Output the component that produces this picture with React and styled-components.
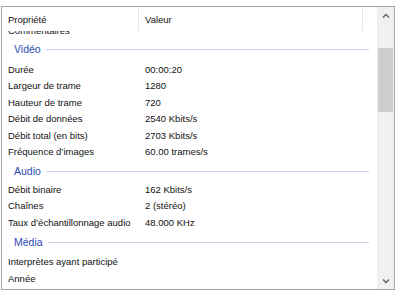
import React from 'react';
import styled, { createGlobalStyle } from 'styled-components';

const GlobalStyle = createGlobalStyle`
  html, body {
    margin: 0;
    padding: 0;
    background: #ffffff;
  }
  body {
    font-family: "Liberation Sans", Arial, sans-serif;
    font-size: 9.5px;
    color: #111111;
  }
`;

const Page = styled.div`
  width: 400px;
  height: 297px;
  padding: 6px 5px 7px 1px;
  box-sizing: border-box;
  background: #ffffff;
`;

const Frame = styled.div`
  display: flex;
  height: 100%;
  border: 1px solid #a8a8a8;
  box-sizing: border-box;
  background: #ffffff;
`;

const ListArea = styled.div`
  flex: 1;
  display: flex;
  flex-direction: column;
  overflow: hidden;
`;

const Header = styled.div`
  display: flex;
  height: 24px;
  flex-shrink: 0;
`;

const HeaderCell = styled.div`
  width: ${(p) => p.$width}px;
  flex-shrink: 0;
  display: flex;
  align-items: center;
  padding-left: ${(p) => p.$pad}px;
  box-sizing: border-box;
  border-right: 1px solid #e5e5e5;
  margin: 1px 0 0;
`;

const Body = styled.div`
  flex: 1;
  overflow: hidden;
  display: flex;
  flex-direction: column;
`;

const ClippedRow = styled.div`
  height: 6px;
  overflow: hidden;
  display: flex;
  align-items: flex-end;
  padding-left: 6px;
  line-height: 12px;
  flex-shrink: 0;
`;

const Row = styled.div`
  display: flex;
  align-items: center;
  height: 16.5px;
  flex-shrink: 0;
`;

const NameCell = styled.div`
  width: 137px;
  padding-left: 6px;
  box-sizing: border-box;
  white-space: nowrap;
  flex-shrink: 0;
`;

const ValueCell = styled.div`
  padding-left: 6px;
  white-space: nowrap;
`;

const Group = styled.div`
  display: flex;
  align-items: center;
  gap: 5px;
  height: ${(p) => p.$height}px;
  padding: 0 8px 0 12px;
  margin-top: ${(p) => p.$top || 0}px;
  color: #2b4bb5;
  font-size: 10.5px;
  flex-shrink: 0;

  &::after {
    content: '';
    flex: 1;
    height: 1px;
    background: #c7d2ea;
  }
`;

const Scrollbar = styled.div`
  width: 17px;
  flex-shrink: 0;
  display: flex;
  flex-direction: column;
  background: #f0f0f0;
`;

const Arrow = styled.div`
  height: 17px;
  display: flex;
  align-items: center;
  justify-content: center;
  flex-shrink: 0;
`;

const Track = styled.div`
  flex: 1;
  display: flex;
  flex-direction: column;
  align-items: center;
`;

const Thumb = styled.div`
  width: 15px;
  height: 64px;
  margin-top: 24px;
  background: #cdcdcd;
`;

const Chevron = ({ up }) => (
  <svg width="8" height="6" viewBox="0 0 8 6">
    <path
      d={up ? 'M1 4.5 L4 1.5 L7 4.5' : 'M1 1.5 L4 4.5 L7 1.5'}
      fill="none"
      stroke="#606060"
      strokeWidth="1.4"
    />
  </svg>
);

const sections = [
  {
    title: 'Vidéo',
    top: 0,
    height: 24,
    rows: [
      ['Durée', '00:00:20'],
      ['Largeur de trame', '1280'],
      ['Hauteur de trame', '720'],
      ['Débit de données', '2540 Kbits/s'],
      ['Débit total (en bits)', '2703 Kbits/s'],
      ['Fréquence d’images', '60.00 trames/s'],
    ],
  },
  {
    title: 'Audio',
    top: 1,
    height: 20,
    rows: [
      ['Débit binaire', '162 Kbits/s'],
      ['Chaînes', '2 (stéréo)'],
      ['Taux d’échantillonnage audio', '48.000 KHz'],
    ],
  },
  {
    title: 'Média',
    top: 0,
    height: 23,
    rows: [
      ['Interprètes ayant participé', ''],
      ['Année', ''],
    ],
  },
];

export default function App() {
  return (
    <>
      <GlobalStyle />
      <Page>
        <Frame>
          <ListArea>
            <Header>
              <HeaderCell $width={137} $pad={6}>Propriété</HeaderCell>
              <HeaderCell $width={224} $pad={6}>Valeur</HeaderCell>
            </Header>
            <Body>
              <ClippedRow>Commentaires</ClippedRow>
              {sections.map((s) => (
                <React.Fragment key={s.title}>
                  <Group $top={s.top} $height={s.height}>{s.title}</Group>
                  {s.rows.map(([name, value]) => (
                    <Row key={name}>
                      <NameCell>{name}</NameCell>
                      <ValueCell>{value}</ValueCell>
                    </Row>
                  ))}
                </React.Fragment>
              ))}
            </Body>
          </ListArea>
          <Scrollbar>
            <Arrow><Chevron up /></Arrow>
            <Track>
              <Thumb />
            </Track>
            <Arrow><Chevron /></Arrow>
          </Scrollbar>
        </Frame>
      </Page>
    </>
  );
}
